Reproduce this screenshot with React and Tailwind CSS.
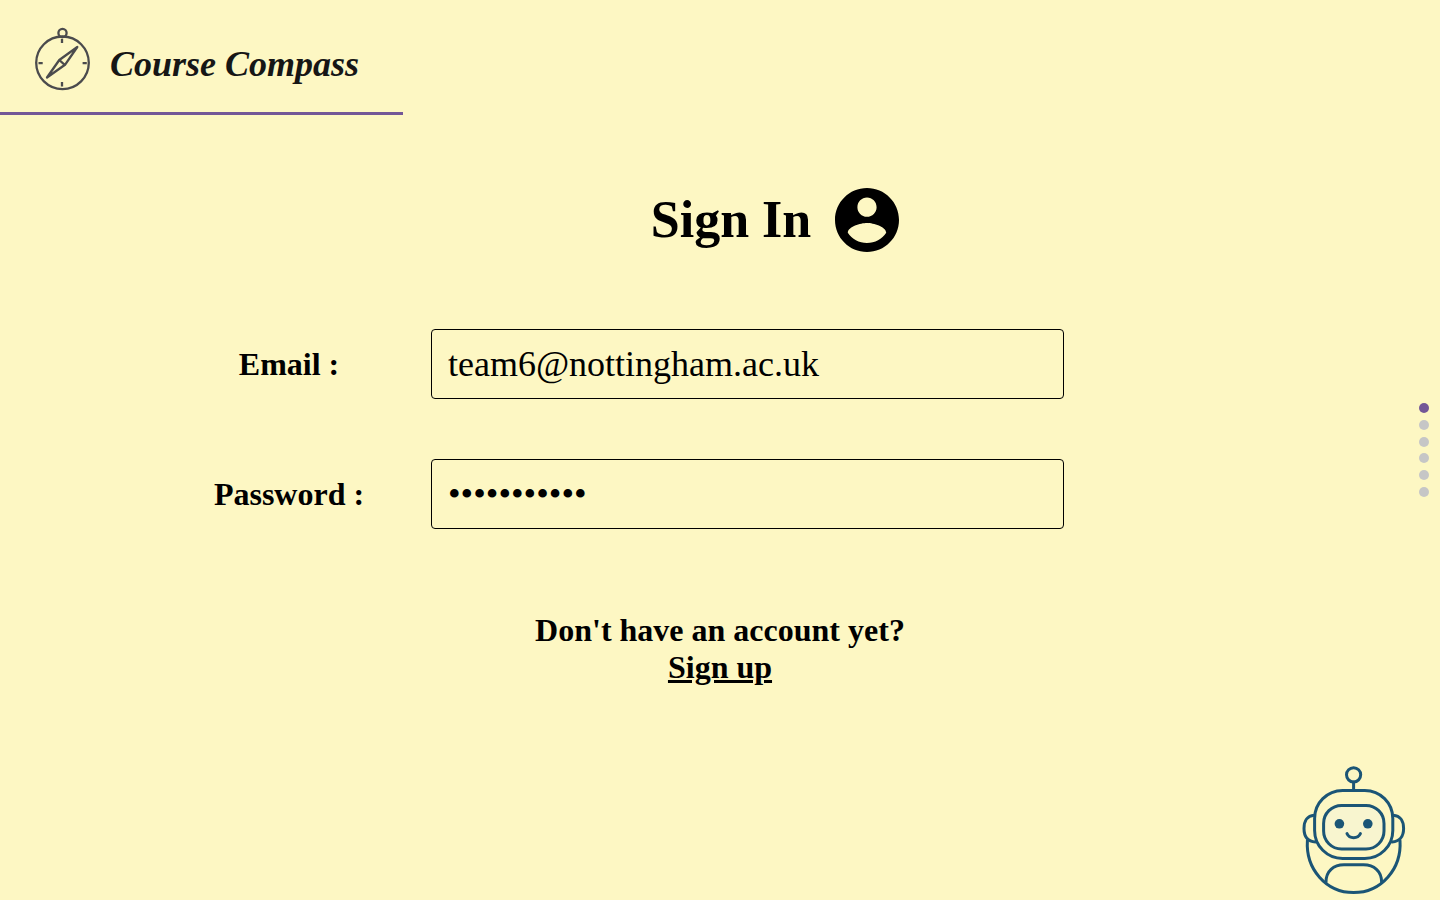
import React from "react";

function CompassIcon() {
  return (
    <svg className="h-16 w-14 shrink-0" viewBox="14 7 56 64" fill="none" stroke="#4b4b4d" strokeWidth="2.3" aria-hidden="true">
      <circle cx="42.5" cy="12.9" r="4.1" />
      <circle cx="42.5" cy="42.8" r="26.3" />
      <path d="M42 18.8v4.2M42 62v4.4M18.5 43.2h4.2M62.6 43.2h4.2" />
      <path d="M57.3 27 39.3 40 27 57.5 45 44.8ZM39.3 40l5.4 4.8" strokeWidth="2.3" strokeLinejoin="round" />
    </svg>
  );
}

function AccountIcon() {
  return (
    <svg className="size-16 shrink-0" viewBox="2 2 20 20" fill="currentColor" aria-hidden="true">
      <path d="M12 2C6.48 2 2 6.48 2 12s4.48 10 10 10 10-4.48 10-10S17.52 2 12 2zm0 3c1.66 0 3 1.34 3 3s-1.34 3-3 3-3-1.34-3-3 1.34-3 3-3zm0 14.2c-2.5 0-4.71-1.28-6-3.22.03-1.99 4-3.08 6-3.08 1.99 0 5.97 1.09 6 3.08-1.29 1.94-3.5 3.22-6 3.22z" />
    </svg>
  );
}

function RobotIcon() {
  return (
    <svg className="h-[145px] w-[130px]" viewBox="0 0 130 145" fill="none" stroke="#1b5576" strokeWidth="3" strokeLinecap="round" aria-hidden="true">
      <circle cx="63.6" cy="19.8" r="7.1" />
      <path d="M63.6 27v8" />
      <rect x="24.6" y="35.4" width="78.2" height="68" rx="28" />
      <rect x="33.6" y="50.4" width="60.4" height="43.6" rx="18" fill="#f8f5cf" />
      <circle cx="49.4" cy="68.8" r="4.8" fill="#1b5576" stroke="none" />
      <circle cx="77.8" cy="68.8" r="4.8" fill="#1b5576" stroke="none" />
      <path d="M57 78.6C59.5 84 67.8 84 70.4 78.6" />
      <path d="M24 60.2C17.5 60.5 14 66 14 73.5S17.5 86.5 25.5 87" />
      <path d="M103.4 60.2C110 60.5 113.6 66 113.6 73.5S110 86.5 102 87" />
      <path d="M17.4 85.5C15.6 114 36 137.6 63.6 137.6S111.8 114 110 85.5" />
      <path d="M36 127C36 116 43.5 109.8 54 109.8H73.5C84 109.8 91.6 116 91.6 127" />
    </svg>
  );
}

const sections = ["Sign in", "Section 2", "Section 3", "Section 4", "Section 5", "Section 6"];

function SectionDots() {
  return (
    <nav aria-label="Sections" className="fixed top-1/2 right-[11px] flex h-[94px] -translate-y-1/2 flex-col justify-between">
      {sections.map((name, i) => (
        <button
          key={name}
          type="button"
          aria-label={name}
          className={i === 0 ? "size-2.5 rounded-full bg-[#735797]" : "size-2.5 rounded-full bg-[#c6c6c6]"}
        />
      ))}
    </nav>
  );
}

function Field({ id, label, type, defaultValue }) {
  return (
    <div className="grid grid-cols-[431fr_633fr_376fr] items-center">
      <label htmlFor={id} className="pl-[147px] text-center text-[32px] leading-9 font-bold whitespace-nowrap">
        {label}
      </label>
      <input
        id={id}
        type={type}
        defaultValue={defaultValue}
        className="h-[70px] w-full min-w-0 rounded border border-black bg-transparent px-4 text-4xl"
      />
    </div>
  );
}

export default function App() {
  return (
    <div className="min-h-screen bg-[#fdf7c3] font-['Liberation_Serif',serif] text-black">
      <header className="flex w-[28%] items-start gap-5 border-b-3 border-[#735797] pt-[27px] pb-[21px] pl-[34px]">
        <CompassIcon />
        <span className="pt-4 text-4xl leading-[42px] font-bold whitespace-nowrap text-[#161616] italic">Course Compass</span>
      </header>

      <main className="pt-[73px]">
        <h1 className="flex items-center justify-center gap-6 pl-[110px] text-[52px] leading-16 font-bold">
          Sign In
          <AccountIcon />
        </h1>

        <form className="mt-[77px] flex flex-col gap-[60px]">
          <Field id="email" label="Email :" type="email" defaultValue="team6@nottingham.ac.uk" />
          <Field id="password" label="Password :" type="password" defaultValue="compass2023" />
        </form>

        <p className="mt-[83px] text-center text-[32px] leading-[37px] font-bold">
          Don't have an account yet?
          <br />
          <a href="#signup" className="underline">Sign up</a>
        </p>
      </main>

      <SectionDots />
      <button type="button" aria-label="Open assistant" className="fixed right-5 bottom-0">
        <RobotIcon />
      </button>
    </div>
  );
}
